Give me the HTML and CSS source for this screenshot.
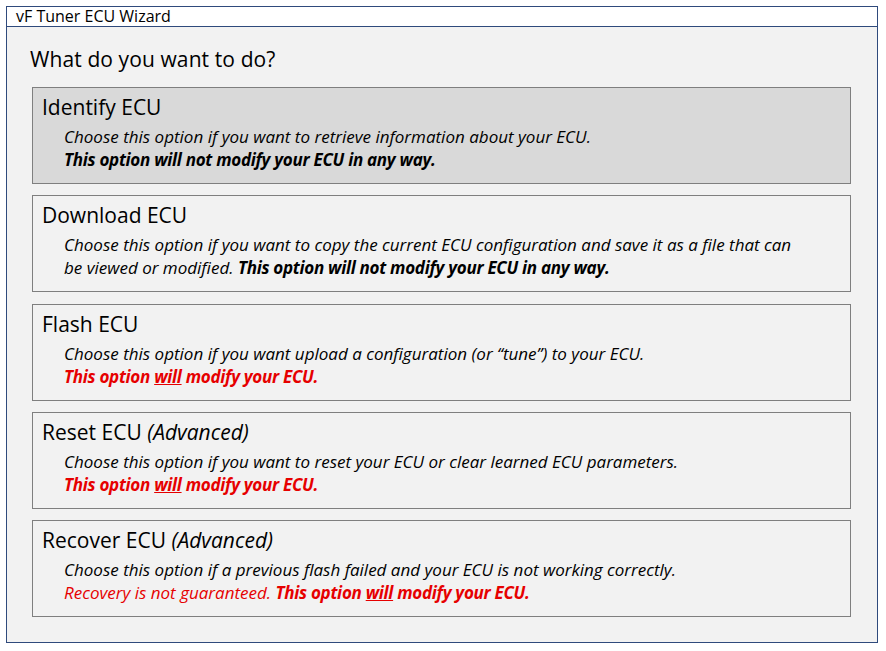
FILE: index.html
```html
<!DOCTYPE html>
<html>
<head>
<meta charset="utf-8">
<link rel="stylesheet" href="styles.css">
</head>
<body>
<div class="window">
  <div class="titlebar">vF Tuner ECU Wizard</div>
  <div class="content">
    <h1 class="question">What do you want to do?</h1>
    <div class="options">
      <div class="option selected">
        <div class="opt-title">Identify ECU</div>
        <div class="opt-desc">Choose this option if you want to retrieve information about your ECU.<br><b>This option will not modify your ECU in any way.</b></div>
      </div>
      <div class="option">
        <div class="opt-title">Download ECU</div>
        <div class="opt-desc">Choose this option if you want to copy the current ECU configuration and save it as a file that can be viewed or modified. <b>This option will not modify your ECU in any way.</b></div>
      </div>
      <div class="option">
        <div class="opt-title">Flash ECU</div>
        <div class="opt-desc">Choose this option if you want upload a configuration (or “tune”) to your ECU.<br><b class="warn">This option <u>will</u> modify your ECU.</b></div>
      </div>
      <div class="option">
        <div class="opt-title">Reset ECU <i>(Advanced)</i></div>
        <div class="opt-desc">Choose this option if you want to reset your ECU or clear learned ECU parameters.<br><b class="warn">This option <u>will</u> modify your ECU.</b></div>
      </div>
      <div class="option">
        <div class="opt-title">Recover ECU <i>(Advanced)</i></div>
        <div class="opt-desc">Choose this option if a previous flash failed and your ECU is not working correctly.<br><span class="warn">Recovery is not guaranteed. <b>This option <u>will</u> modify your ECU.</b></span></div>
      </div>
    </div>
  </div>
</div>
</body>
</html>
```

FILE: styles.css
```css
html, body {
  margin: 0;
  padding: 0;
  background: #ffffff;
}
body {
  font-family: "Open Sans", Lato, "Liberation Sans", sans-serif;
  color: #000;
}
.window {
  margin: 6px 0 0 6px;
  width: 872px;
  height: 637px;
  box-sizing: border-box;
  border: 1px solid #2f4a7c;
  background: #f2f2f2;
  display: flex;
  flex-direction: column;
}
.titlebar {
  height: 20px;
  box-sizing: border-box;
  background: #ffffff;
  border-bottom: 1px solid #2f4a7c;
  padding-left: 9px;
  font-size: 16px;
  line-height: 19px;
}
.content {
  padding: 19px 26px 0 25px;
}
.question {
  margin: 0 0 0 -2px;
  font-weight: normal;
  font-size: 21px;
  line-height: 27px;
  letter-spacing: 0.1px;
}
.options {
  margin-top: 14px;
  display: flex;
  flex-direction: column;
  gap: 11.25px;
}
.option {
  height: 97px;
  box-sizing: border-box;
  border: 1px solid #7f7f7f;
  background: #f2f2f2;
  padding: 5px 45px 0 9px;
}
.option.selected {
  background: #d9d9d9;
}
.opt-title {
  font-size: 21px;
  line-height: 28px;
}
.opt-desc {
  margin-top: 4px;
  padding-left: 22px;
  font-style: italic;
  font-size: 17px;
  line-height: 23px;
}
.opt-desc b {
  letter-spacing: -0.28px;
}
.warn {
  color: #e60000;
}
```
